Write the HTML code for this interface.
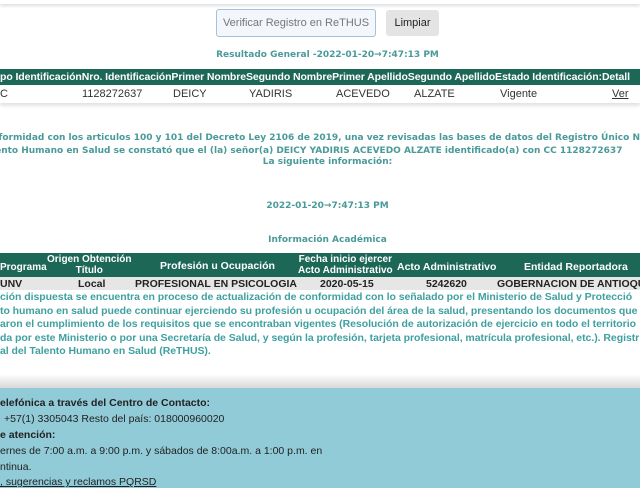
<!DOCTYPE html>
<html><head><meta charset="utf-8"><style>
*{margin:0;padding:0;box-sizing:border-box}
body{width:640px;height:488px;overflow:hidden;background:#fff;position:relative;font-family:"Liberation Sans",sans-serif}
.a{position:absolute;white-space:nowrap}
.v{font-family:"DejaVu Sans",sans-serif;font-weight:bold;color:#4a9a9a;font-size:9px}
.hd{background:#1d6757;color:#fff;font-weight:bold;font-size:11px}
.f{font-size:10.5px;color:#222}
</style></head><body>
<div class="a" style="left:0;top:0;width:640px;height:4px;box-shadow:0 2px 3px #ddd"></div>
<div class="a" style="left:216px;top:9px;width:160px;height:28px;border:1px solid #9fc3e0;border-radius:3px;background:#f3f6fa;font-size:11px;color:#777;line-height:26px;text-align:center">Verificar Registro en ReTHUS</div>
<div class="a" style="left:386px;top:10px;width:53px;height:26px;background:#e4e4e4;border-radius:3px;font-size:11px;color:#222;line-height:26px;text-align:center">Limpiar</div>
<div class="a v" style="left:0;width:655px;top:50px;text-align:center">Resultado General -2022-01-20→7:47:13 PM</div>
<div class="a hd" style="left:0;top:69px;width:640px;height:16px;line-height:16px;font-size:10.5px;letter-spacing:-0.1px">po IdentificaciónNro. IdentificaciónPrimer NombreSegundo NombrePrimer ApellidoSegundo ApellidoEstado Identificación:Detall</div>
<div class="a" style="left:0;top:85px;width:640px;height:18px;box-shadow:0 3px 3px #e4e4e4;background:#fff"></div>
<div class="a" style="top:88px;font-size:11px;color:#333;left:0">C</div>
<div class="a" style="top:88px;font-size:11px;color:#333;left:82px">1128272637</div>
<div class="a" style="top:88px;font-size:11px;color:#333;left:173px">DEICY</div>
<div class="a" style="top:88px;font-size:11px;color:#333;left:249px">YADIRIS</div>
<div class="a" style="top:88px;font-size:11px;color:#333;left:336px">ACEVEDO</div>
<div class="a" style="top:88px;font-size:11px;color:#333;left:414px">ALZATE</div>
<div class="a" style="top:88px;font-size:11px;color:#333;left:500px">Vigente</div>
<div class="a" style="top:88px;font-size:11px;color:#333;left:612px;text-decoration:underline">Ver</div>
<div class="a v" style="left:-8px;top:132px;line-height:12.5px">nformidad con los articulos 100 y 101 del Decreto Ley 2106 de 2019, una vez revisadas las bases de datos del Registro Único N<br>lento Humano en Salud se constató que el (la) señor(a) DEICY YADIRIS ACEVEDO ALZATE identificado(a) con CC 1128272637</div>
<div class="a v" style="left:0;width:655px;top:157px;text-align:center">La siguiente información:</div>
<div class="a v" style="left:0;width:655px;top:201px;text-align:center">2022-01-20→7:47:13 PM</div>
<div class="a v" style="left:0;width:655px;top:235px;text-align:center">Información Académica</div>
<div class="a hd" style="left:0;top:253px;width:640px;height:24px"></div>
<div class="a hd" style="left:0;top:262px;font-size:10px">Programa</div>
<div class="a hd" style="left:47px;top:254px;font-size:10px;text-align:center;line-height:11px">Origen Obtención<br>Título</div>
<div class="a hd" style="left:160px;top:260px;font-size:10.5px">Profesión u Ocupación</div>
<div class="a hd" style="left:298px;top:254px;font-size:10px;text-align:center;line-height:11px">Fecha inicio ejercer<br>Acto Administrativo</div>
<div class="a hd" style="left:397px;top:261px;font-size:10.5px">Acto Administrativo</div>
<div class="a hd" style="left:524px;top:261px;font-size:10.5px">Entidad Reportadora</div>
<div class="a" style="left:0;top:277px;width:640px;height:13px;background:#e6e6e6"></div>
<div class="a" style="top:278px;font-size:10.5px;color:#222;font-weight:bold;left:0">UNV</div>
<div class="a" style="top:278px;font-size:10.5px;color:#222;font-weight:bold;left:78px">Local</div>
<div class="a" style="top:278px;font-size:10.5px;color:#222;font-weight:bold;left:135px">PROFESIONAL EN PSICOLOGIA</div>
<div class="a" style="top:278px;font-size:10.5px;color:#222;font-weight:bold;left:320px">2020-05-15</div>
<div class="a" style="top:278px;font-size:10.5px;color:#222;font-weight:bold;left:426px">5242620</div>
<div class="a" style="top:278px;font-size:10.5px;color:#222;font-weight:bold;left:497px">GOBERNACION DE ANTIOQU</div>
<div class="a" style="left:0;top:291px;font-size:10.5px;color:#40a0a0;font-weight:bold;line-height:13.5px;letter-spacing:-0.05px">ción dispuesta se encuentra en proceso de actualización de conformidad con lo señalado por el Ministerio de Salud y Protecció<br>to humano en salud puede continuar ejerciendo su profesión u ocupación del área de la salud, presentando los documentos que<br>aron el cumplimiento de los requisitos que se encontraban vigentes (Resolución de autorización de ejercicio en todo el territorio<br>da por este Ministerio o por una Secretaría de Salud, y según la profesión, tarjeta profesional, matrícula profesional, etc.). Registr<br>al del Talento Humano en Salud (ReTHUS).</div>
<div class="a" style="left:0;top:374px;width:640px;height:14px;background:linear-gradient(#fff,#d8d8d8)"></div>
<div class="a" style="left:0;top:388px;width:640px;height:100px;background:#90cbd7"></div>
<div class="a f" style="left:0;top:397px;font-weight:bold">elefónica a través del Centro de Contacto:</div>
<div class="a f" style="left:4px;top:413px">+57(1) 3305043 Resto del país: 018000960020</div>
<div class="a f" style="left:0;top:429px;font-weight:bold">e atención:</div>
<div class="a f" style="left:0;top:445px">ernes de 7:00 a.m. a 9:00 p.m. y sábados de 8:00a.m. a 1:00 p.m. en</div>
<div class="a f" style="left:0;top:461px">ntinua.</div>
<div class="a f" style="left:0;top:476px;text-decoration:underline">, sugerencias y reclamos PQRSD</div>
</body></html>
